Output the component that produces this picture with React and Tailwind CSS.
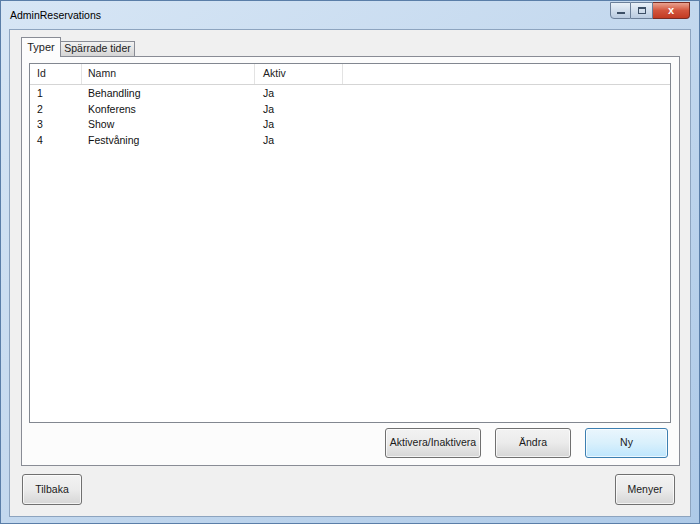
import React from 'react';

const rows = [
    { id: 1, name: 'Behandling', active: 'Ja' },
    { id: 2, name: 'Konferens', active: 'Ja' },
    { id: 3, name: 'Show', active: 'Ja' },
    { id: 4, name: 'Festvåning', active: 'Ja' },
];

function WinButton({ children, className = '', primary = false }) {
    const look = primary
        ? 'border-[#3c7fb1] bg-gradient-to-b from-[#eaf6fd] via-[#d9f0fc] to-[#bee6fd]'
        : 'border-[#707070] bg-gradient-to-b from-[#f2f2f2] via-[#ebebeb] to-[#d6d6d6]';
    return (
        <button
            className={`flex items-center justify-center border rounded-[3px] text-[10.5px] text-[#1a1a1a] shadow-[inset_0_0_0_1px_rgba(255,255,255,0.7)] ${look} ${className}`}
        >
            {children}
        </button>
    );
}

export default function App() {
    return (
        <div
            className="w-[700px] h-[524px] flex flex-col overflow-hidden bg-gradient-to-br from-[#d7e6f5] via-[#c3d8ee] to-[#aecae8] border border-[#5a7ea8]"
            style={{ fontFamily: '"Liberation Sans", Arial, sans-serif' }}
        >
            {/* title bar */}
            <div className="h-[28px] flex items-start justify-between shrink-0">
                <div className="pl-[9px] pt-[7px] text-[10.5px] text-black">AdminReservations</div>
                <div className="flex mr-[9px] mt-[1px]">
                    <div className="w-[21px] h-[17px] border border-[#6b7f99] rounded-bl-[4px] bg-gradient-to-b from-[#e9f0f8] to-[#b9cbe0] flex items-end justify-center pb-[4px]">
                        <div className="w-[8px] h-[2px] bg-[#3c4f66]" />
                    </div>
                    <div className="w-[22px] h-[17px] border-y border-r border-[#6b7f99] bg-gradient-to-b from-[#e9f0f8] to-[#b9cbe0] flex items-center justify-center">
                        <div className="w-[8px] h-[7px] border border-[#3c4f66] border-t-2" />
                    </div>
                    <div className="w-[37px] h-[17px] border-y border-r border-[#7a2b22] rounded-br-[4px] bg-gradient-to-b from-[#e8a18f] via-[#d2543c] to-[#c23a22] flex items-center justify-center text-white text-[11px] font-bold">
                        x
                    </div>
                </div>
            </div>

            {/* client area */}
            <div className="flex-1 mx-[8px] mb-[6px] bg-[#f0f0f0] border border-[#8da4bf] flex flex-col">
                {/* tabs */}
                <div className="ml-[11px] mr-[10px] mt-[7px] flex flex-col">
                    <div className="flex items-end h-[19px] relative z-10">
                        <div className="h-[20px] w-[40px] bg-[#fcfcfc] border-x border-t border-[#898c95] flex items-center justify-center text-[11px] text-[#222] -mb-[1px]">
                            Typer
                        </div>
                        <div className="h-[15px] w-[74px] bg-gradient-to-b from-[#f2f2f2] to-[#d5d5d5] border-r border-t border-[#898c95] flex items-center justify-center text-[10.5px] text-[#222]">
                            Spärrade tider
                        </div>
                    </div>
                    <div className="h-[410px] border border-[#898c95] bg-[#fcfcfc] flex flex-col px-[7px] pt-[6px] pb-[7px]">
                        {/* list view */}
                        <div className="h-[360px] mr-[1px] border border-[#828790] bg-white flex flex-col">
                            <div className="h-[21px] flex border-b border-[#d5d5d5] text-[10.5px] text-[#222]">
                                <div className="w-[52px] pl-[7px] border-r border-[#e3e3e3] flex items-center">Id</div>
                                <div className="w-[173px] pl-[6px] border-r border-[#e3e3e3] flex items-center">Namn</div>
                                <div className="w-[88px] pl-[8px] border-r border-[#e3e3e3] flex items-center">Aktiv</div>
                            </div>
                            <div className="pt-[1px]">
                                {rows.map((r) => (
                                    <div key={r.id} className="h-[15.7px] flex items-center text-[10.5px] text-[#111]">
                                        <div className="w-[52px] pl-[7px]">{r.id}</div>
                                        <div className="w-[173px] pl-[6px]">{r.name}</div>
                                        <div className="w-[88px] pl-[8px]">{r.active}</div>
                                    </div>
                                ))}
                            </div>
                        </div>
                        <div className="flex justify-end gap-[14px] mt-[5px] mr-[4px]">
                            <WinButton className="w-[96px] h-[30px]">Aktivera/Inaktivera</WinButton>
                            <WinButton className="w-[76px] h-[30px]">Ändra</WinButton>
                            <WinButton primary className="w-[83px] h-[30px]">Ny</WinButton>
                        </div>
                    </div>
                </div>

                {/* bottom buttons */}
                <div className="flex justify-between mt-[8px] ml-[12px] mr-[15px]">
                    <WinButton className="w-[60px] h-[31px]">Tilbaka</WinButton>
                    <WinButton className="w-[60px] h-[31px]">Menyer</WinButton>
                </div>
            </div>
        </div>
    );
}
